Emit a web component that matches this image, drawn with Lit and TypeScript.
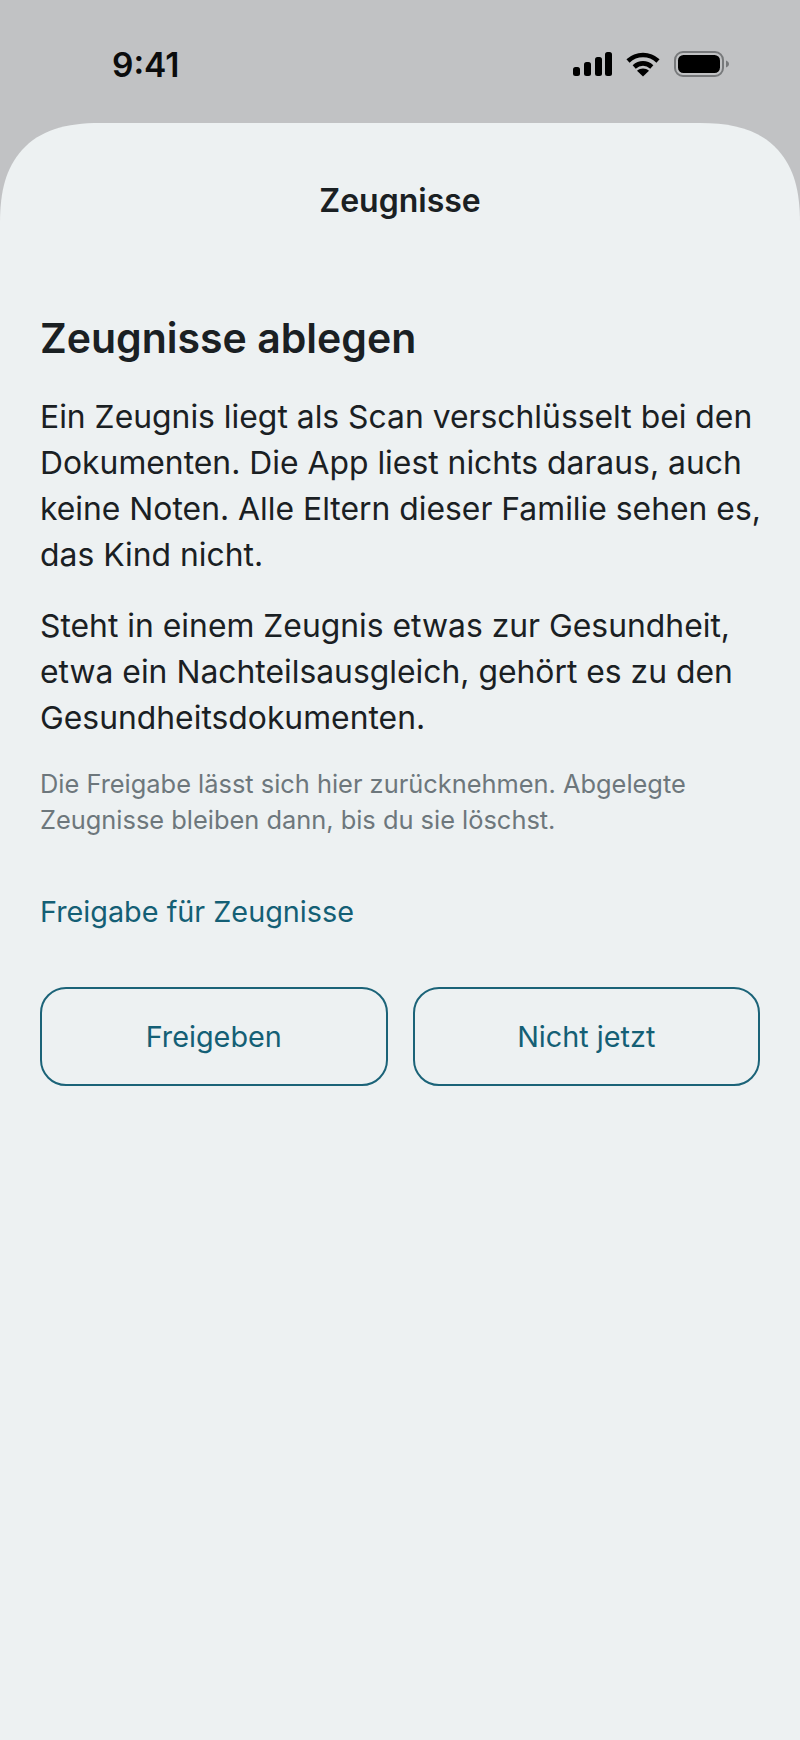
import { LitElement, html, css } from "lit";
import { customElement } from "lit/decorators.js";

@customElement("app-root")
export class AppRoot extends LitElement {
  static styles = css`
    :host {
      display: block;
      width: 800px;
      height: 1740px;
      background: #c1c2c4;
      font-family: Inter, "Liberation Sans", sans-serif;
      overflow: hidden;
    }
    .status {
      height: 123px;
      box-sizing: border-box;
      padding: 45px 71px 0 112px;
      display: flex;
      justify-content: space-between;
      align-items: flex-start;
    }
    .time {
      font-size: 33.5px;
      line-height: 40px;
      font-weight: 600;
      color: #0b0c0d;
    }
    .icons {
      display: flex;
      align-items: center;
      gap: 14px;
      height: 40px;
      margin-top: -1px;
    }
    .sheet {
      height: 1617px;
      background: #edf1f2;
      box-sizing: border-box;
      padding: 0 40px;
      clip-path: path("M0 1617 L0 100 C0 68 6 45 22 27 C40 7 66 0 100 0 L700 0 C734 0 760 7 778 27 C794 45 800 68 800 100 L800 1617 Z");
    }
    .nav {
      height: 189px;
      box-sizing: border-box;
      padding-top: 55px;
      text-align: center;
      font-size: 32px;
      line-height: 46px;
      font-weight: 600;
      color: #1a2023;
    }
    h1 {
      margin: 0 0 30px;
      font-size: 41px;
      line-height: 52px;
      font-weight: 600;
      color: #1a2023;
    }
    p {
      margin: 0 -6px 25px 0;
      font-size: 31.85px;
      line-height: 46px;
      color: #1a2023;
    }
    p.note {
      margin: 0 0 54px;
      font-size: 25.4px;
      line-height: 36px;
      color: #6d777c;
    }
    .link {
      font-size: 28.8px;
      line-height: 40px;
      color: #145f75;
      margin-bottom: 55px;
    }
    .actions {
      display: grid;
      grid-template-columns: 1fr 1fr;
      gap: 25px;
    }
    .btn {
      height: 99px;
      box-sizing: border-box;
      border: 2px solid #1b6378;
      border-radius: 26px;
      display: flex;
      align-items: center;
      justify-content: center;
      font-size: 28.8px;
      color: #145f75;
    }
  `;

  render() {
    return html`
      <div class="status">
        <div class="time">9:41</div>
        <div class="icons">
          <svg width="39" height="25" viewBox="0 0 39 25" fill="#000">
            <rect x="0" y="15" width="7" height="9" rx="2.5" />
            <rect x="11" y="10" width="7" height="14" rx="2.5" />
            <rect x="22" y="5" width="7" height="19" rx="2.5" />
            <rect x="32" y="0" width="7" height="24" rx="2.5" />
          </svg>
          <svg width="34" height="25" viewBox="0 0 34 25" fill="none" stroke="#000" stroke-width="4.6">
            <path d="M2 9 C10.5 1 23.5 1 32 9" />
            <path d="M8.2 15 C13.5 10.2 20.5 10.2 25.8 15" />
            <path d="M17 24.5 L11 18.7 C14.5 15.8 19.5 15.8 23 18.7 Z" fill="#000" stroke="none" />
          </svg>
          <svg width="55" height="26" viewBox="0 0 55 26">
            <rect x="1" y="1" width="48" height="24" rx="8" fill="none" stroke="#77797b" stroke-width="2" />
            <rect x="4" y="4" width="42" height="18" rx="5.5" fill="#000" />
            <path d="M52 9.5 C54 10.5 55 11.5 55 13 C55 14.5 54 15.5 52 16.5 Z" fill="#77797b" />
          </svg>
        </div>
      </div>
      <div class="sheet">
        <div class="nav">Zeugnisse</div>
        <h1>Zeugnisse ablegen</h1>
        <p>Ein Zeugnis liegt als Scan verschlüsselt bei den Dokumenten. Die App liest nichts daraus, auch keine Noten. Alle Eltern dieser Familie sehen es, das Kind nicht.</p>
        <p>Steht in einem Zeugnis etwas zur Gesundheit, etwa ein Nachteilsausgleich, gehört es zu den Gesundheitsdokumenten.</p>
        <p class="note">Die Freigabe lässt sich hier zurücknehmen. Abgelegte Zeugnisse bleiben dann, bis du sie löschst.</p>
        <div class="link">Freigabe für Zeugnisse</div>
        <div class="actions">
          <div class="btn">Freigeben</div>
          <div class="btn">Nicht jetzt</div>
        </div>
      </div>
    `;
  }
}
